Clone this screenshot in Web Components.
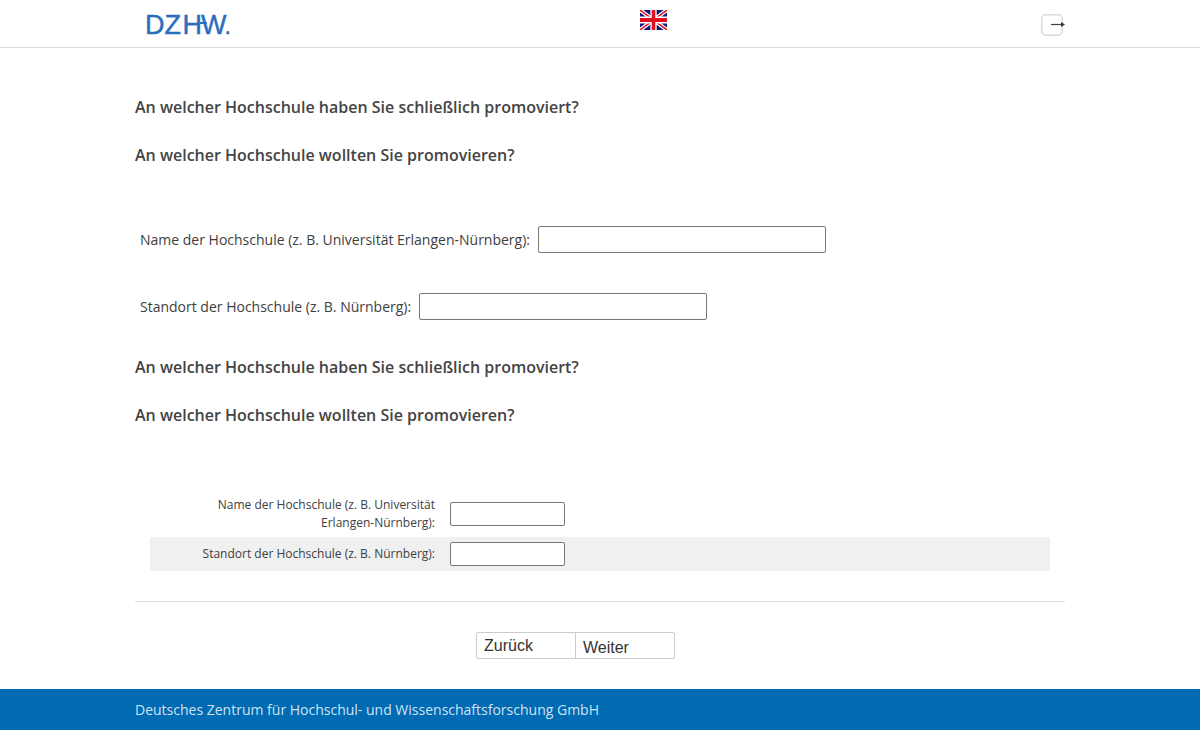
<!DOCTYPE html>
<html lang="de">
<head>
<meta charset="utf-8">
<title>DZHW</title>
<style>
	html, body { margin: 0; padding: 0; background: #fff; }
	body { font-family: 'Open Sans', sans-serif; color: #3e3e3e; font-size: 14px; }
</style>
</head>
<body>
<site-header></site-header>
<survey-page>
	<survey-heading style="margin-top:48px">An welcher Hochschule haben Sie schließlich promoviert?</survey-heading>
	<survey-heading style="margin-top:26px">An welcher Hochschule wollten Sie promovieren?</survey-heading>
	<inline-field style="margin-top:60px" label="Name der Hochschule (z. B. Universität Erlangen-Nürnberg):"></inline-field>
	<inline-field style="margin-top:40px" label="Standort der Hochschule (z. B. Nürnberg):"></inline-field>
	<survey-heading style="margin-top:36px">An welcher Hochschule haben Sie schließlich promoviert?</survey-heading>
	<survey-heading style="margin-top:26px">An welcher Hochschule wollten Sie promovieren?</survey-heading>
	<matrix-row style="margin-top:70px">Name der Hochschule (z. B. Universität Erlangen-Nürnberg):</matrix-row>
	<matrix-row shaded style="margin-top:5px">Standort der Hochschule (z. B. Nürnberg):</matrix-row>
	<nav-buttons></nav-buttons>
</survey-page>
<site-footer>Deutsches Zentrum für Hochschul- und Wissenschaftsforschung GmbH</site-footer>

<script>
function defineElement(name, markup) {
	const template = document.createElement('template');
	template.innerHTML = markup;
	customElements.define(name, class extends HTMLElement {
		constructor() {
			super();
			this.attachShadow({ mode: 'open' }).appendChild(template.content.cloneNode(true));
		}
		connectedCallback() {
			const label = this.shadowRoot.querySelector('.label');
			if (label && this.hasAttribute('label')) label.textContent = this.getAttribute('label');
		}
	});
}

defineElement('site-header', `
<style>
	:host { display: block; height: 47px; border-bottom: 1px solid #ddd; }
	.inner { width: 930px; height: 47px; margin: 0 auto; display: grid; grid-template-columns: 505px 27px 1fr; }
	.logo { margin: 10px 0 0 10px; width: 90px; height: 31px; position: relative; font: 27px/31px 'Liberation Sans', sans-serif; color: #2a6ebb; white-space: nowrap; -webkit-text-stroke: 0.4px #2a6ebb; }
	.logo .z { letter-spacing: 1.5px; }
	.logo .h { letter-spacing: -1px; }
	.logo i { position: absolute; left: 55px; top: 12px; width: 7px; height: 2px; background: #2a6ebb; }
	.logo em { font: 700 16px/1 'Liberation Sans', sans-serif; margin-left: -1px; }
	.flag { margin-top: 10px; width: 27px; height: 20px; display: block; }
	.logout { justify-self: end; margin-top: 14px; display: block; }
</style>
<div class="inner">
	<div class="logo">D<span class="z">Z</span><span class="h">H</span>W<em>.</em><i></i></div>
	<svg class="flag" viewBox="0 0 60 40" preserveAspectRatio="none">
		<rect width="60" height="40" fill="#10187a"/>
		<path d="M0 0L60 40M60 0L0 40" stroke="#fff" stroke-width="8"/>
		<path d="M0 0L60 40M60 0L0 40" stroke="#e0101f" stroke-width="3"/>
		<path d="M30 0V40M0 20H60" stroke="#fff" stroke-width="14"/>
		<path d="M30 0V40M0 20H60" stroke="#e0101f" stroke-width="8"/>
	</svg>
	<svg class="logout" width="24" height="22" viewBox="0 0 24 22">
		<rect x="0.75" y="0.75" width="20.5" height="20.5" rx="4" fill="#fff" stroke="#dadada" stroke-width="1.5"/>
		<path d="M10 10.5H21" stroke="#444" stroke-width="1.2"/>
		<path d="M20 8L24 10.5L20 13Z" fill="#333"/>
	</svg>
</div>
`);

defineElement('survey-page', `
<style>
	:host { display: block; width: 930px; margin: 0 auto; }
</style>
<slot></slot>
`);

defineElement('survey-heading', `
<style>
	:host { display: block; font-size: 16px; line-height: 22px; font-weight: 600; color: #444; }
</style>
<slot></slot>
`);

defineElement('inline-field', `
<style>
	:host { display: flex; align-items: center; gap: 8px; padding-left: 5px; height: 27px; font-size: 14px; }
	input { box-sizing: border-box; width: 288px; height: 27px; margin: 0; border: 1px solid #767676; border-radius: 2px; background: #fff; }
</style>
<span class="label"></span><input type="text">
`);

defineElement('matrix-row', `
<style>
	:host { display: flex; align-items: center; width: 900px; margin-left: 15px; min-height: 34px; border-radius: 3px; font-size: 12px; line-height: 18px; box-sizing: border-box; }
	:host([shaded]) { background: #f0f0f0; }
	.text { box-sizing: border-box; width: 300px; padding: 0 15px 0 15px; text-align: right; }
	input { box-sizing: border-box; width: 115px; height: 24px; margin: 0; border: 1px solid #767676; border-radius: 2px; background: #fff; }
</style>
<div class="text"><slot></slot></div><input type="text">
`);

defineElement('nav-buttons', `
<style>
	:host { display: flex; justify-content: center; margin-top: 30px; padding: 30px 50px 0 0; border-top: 1px solid #ddd; height: 27px; }
	.group { display: flex; width: 199px; height: 27px; box-sizing: border-box; border: 1px solid #ccc; border-radius: 2px; font: 16px 'Liberation Sans', sans-serif; color: #333; }
	.b { box-sizing: border-box; width: 98px; padding-left: 7.5px; line-height: 25px; }
	.b + .b { width: 99px; border-left: 1px solid #ccc; line-height: 29px; padding-left: 7.5px; }
</style>
<div class="group"><div class="b">Zurück</div><div class="b">Weiter</div></div>
`);

defineElement('site-footer', `
<style>
	:host { display: block; margin-top: 30px; height: 41px; background: #006ab2; color: #cfe3f2; font-size: 14px; line-height: 41px; }
	div { width: 930px; margin: 0 auto; }
</style>
<div><slot></slot></div>
`);
</script>
</body>
</html>
